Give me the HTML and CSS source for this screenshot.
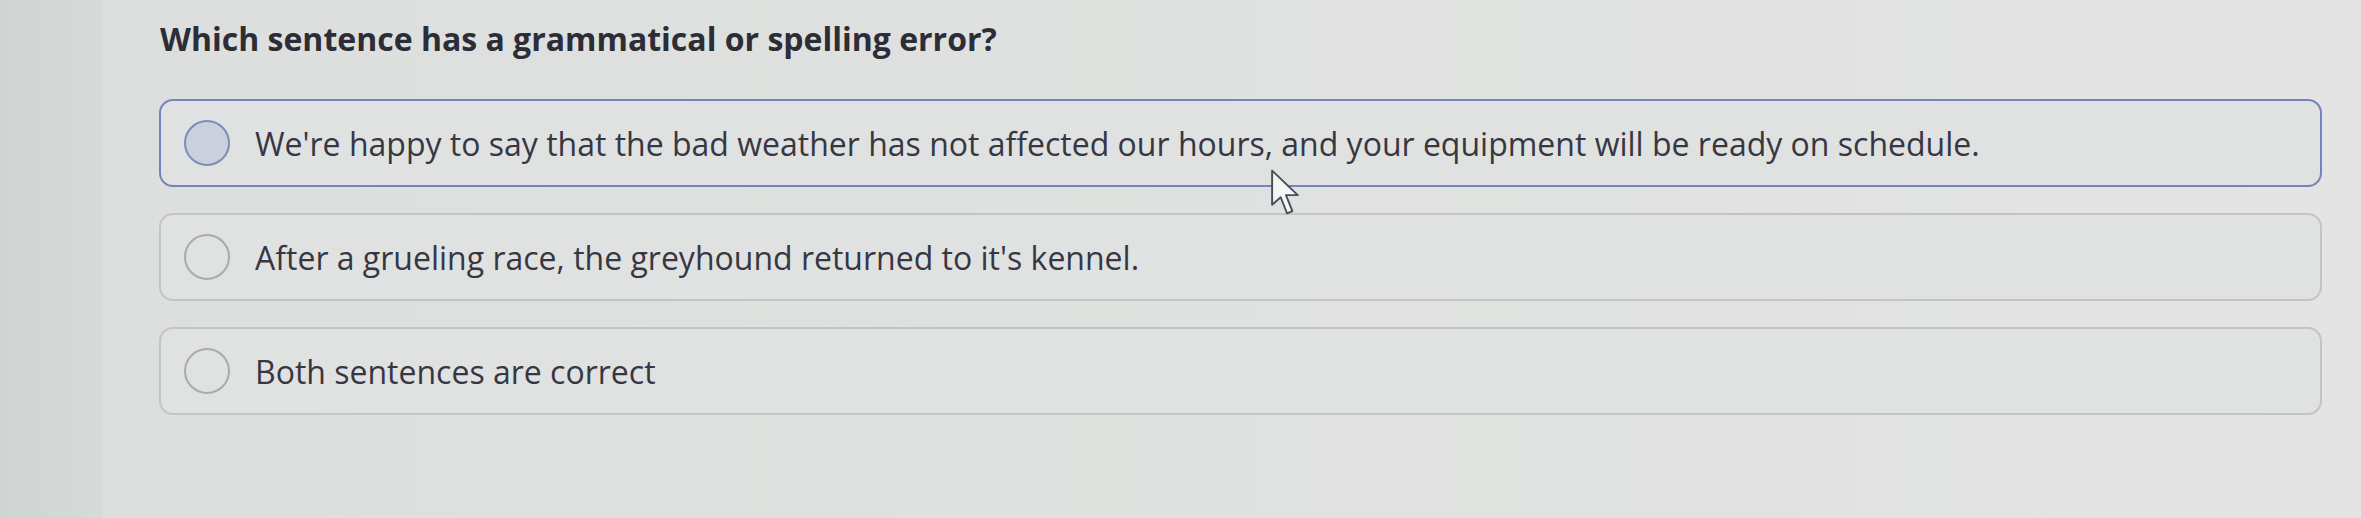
FILE: index.html
```html
<!DOCTYPE html>
<html lang="en">
<head>
    <meta charset="UTF-8">
    <meta name="viewport" content="width=device-width, initial-scale=1.0">
    <title>Question</title>
    <link rel="stylesheet" href="styles.css">
</head>
<body>

<div class="page">
    <div class="rail"></div>

    <div class="quiz">
        <h2 class="question">Which sentence has a grammatical or spelling error?</h2>

        <div class="options">
            <label class="option hover">
                <span class="radio"></span>
                <span class="option-text">We're happy to say that the bad weather has not affected our hours, and your equipment will be ready on schedule.</span>
            </label>

            <label class="option">
                <span class="radio"></span>
                <span class="option-text">After a grueling race, the greyhound returned to it's kennel.</span>
            </label>

            <label class="option">
                <span class="radio"></span>
                <span class="option-text">Both sentences are correct</span>
            </label>
        </div>
    </div>

    <!-- mouse pointer sitting over the first answer -->
    <svg class="cursor" width="32" height="50" viewBox="0 0 30 46">
        <path d="M2 2 L2 34 L10 27 L16 42 L21 40 L15 25 L26 25 Z" fill="#f4f5f5" stroke="#4a4c57" stroke-width="1.8" stroke-linejoin="round"/>
    </svg>
</div>

</body>
</html>
```

FILE: styles.css
```css
body {
    margin: 0;
    padding: 0;
    font-family: "Open Sans", "Noto Sans", sans-serif;
    background-color: #dddfde;
}

.page {
    position: relative;
    display: flex;
    height: 518px;
    overflow: hidden;
}

.rail {
    width: 102px;
    flex-shrink: 0;
    background: linear-gradient(90deg, #d0d4d3, #d6dad9);
}

.quiz {
    flex: 1;
    padding: 17px 39px 0 57px;
    background: linear-gradient(90deg, #dcdfdd, #e3e4e3);
}

.question {
    margin: 0 0 39px 1px;
    font-size: 32px;
    font-weight: 700;
    color: #2c2d36;
}

.options {
    display: flex;
    flex-direction: column;
    gap: 26px;
}

.option {
    display: flex;
    align-items: center;
    gap: 25px;
    height: 88px;
    padding-left: 23px;
    border: 2px solid #c3c5c5;
    border-radius: 14px;
    box-sizing: border-box;
    background-color: #e0e2e1;
    cursor: pointer;
}

.option.hover {
    border-color: #7584bd;
}

.radio {
    width: 46px;
    height: 46px;
    flex-shrink: 0;
    border: 2px solid #a9abab;
    border-radius: 50%;
    box-sizing: border-box;
}

.option.hover .radio {
    border-color: #7b8cc0;
    background-color: #cbd1dc;
}

.option-text {
    font-size: 32px;
    color: #363743;
}

.cursor {
    position: absolute;
    left: 1270px;
    top: 168px;
}
```
